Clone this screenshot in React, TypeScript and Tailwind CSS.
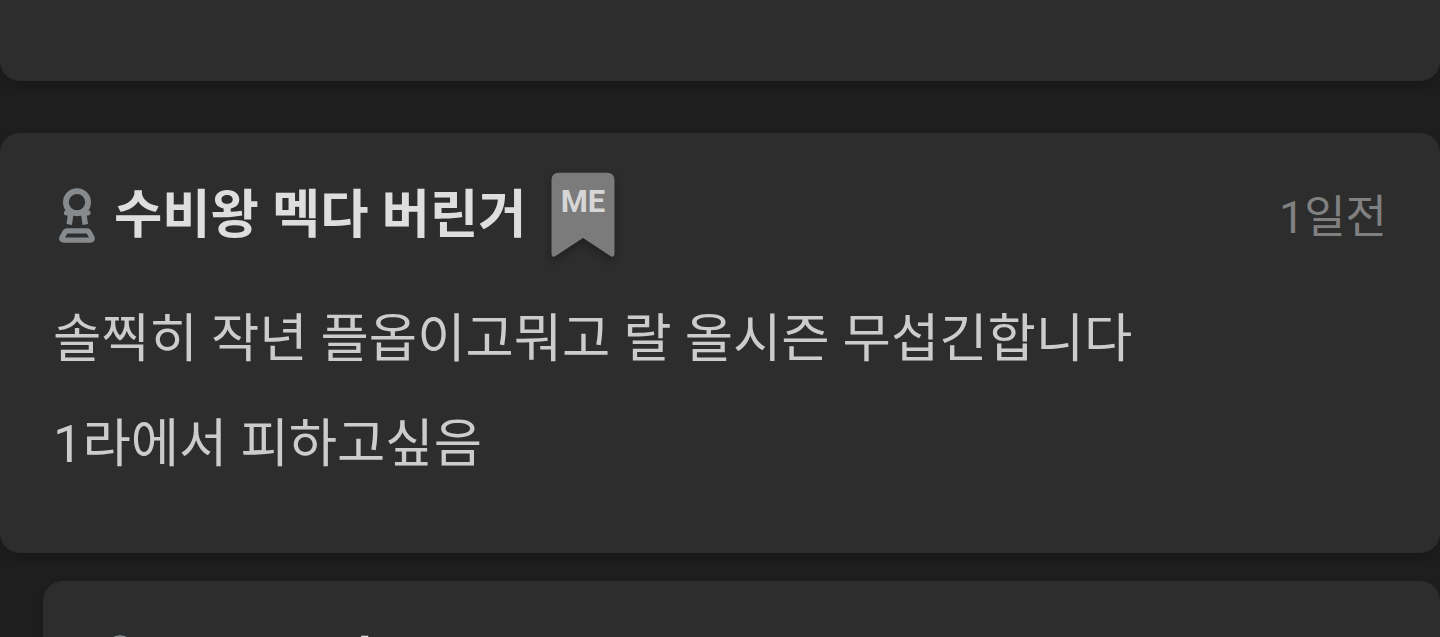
import type { ReactNode } from 'react'

const fontStack = "font-['Roboto','Noto_Sans_CJK_KR',sans-serif]"

function RankIcon() {
  return (
    <svg width="40" height="58" viewBox="0 0 40 58" fill="none" stroke="#868a8d" strokeLinejoin="round" strokeLinecap="round">
      <circle cx="20" cy="16.2" r="11.1" strokeWidth="5.8" />
      <path d="M9.500 26.800H31" strokeWidth="5.2" />
      <path d="M13.700 28L12.200 38.500M26.800 28L28.300 38.500" strokeWidth="5.500" strokeLinecap="butt" />
      <path d="M10 44.900H30Q31.500 44.900 32.500 47L35 51.500Q36 54.100 33 54.100H7Q4 54.100 5 51.500L7.500 47Q8.500 44.900 10 44.900Z" strokeWidth="5.400" />
    </svg>
  )
}

function MeBadge() {
  return (
    <div className="relative h-[85px] w-[64px] shrink-0">
      <svg width="64" height="85" viewBox="0 0 64 85" className="overflow-visible drop-shadow-[0_4px_4px_rgba(0,0,0,0.3)]">
        <path d="M8 0.800H56Q63.500 0.800 63.500 8.300V81Q63.500 86.500 59 83.800L32 66L5 83.800Q0.500 86.500 0.500 81V8.300Q0.500 0.800 8 0.800Z" fill="#7b7b7b" />
      </svg>
      <span className="absolute inset-x-0 top-[12px] pl-px text-center text-[31px] leading-[36px] font-bold text-[#d6d6d6]">ME</span>
    </div>
  )
}

function Nickname({ children }: { children: ReactNode }) {
  return (
    <div className="flex items-center">
      <RankIcon />
      <span className="ml-[17px] text-[52.5px] leading-[60px] font-bold whitespace-nowrap text-[#dedede]">{children}</span>
    </div>
  )
}

export default function App() {
  return (
    <div className={`flex h-[637px] w-full flex-col overflow-hidden bg-[#1e1e1e] ${fontStack}`}>
      <div className="h-[81px] shrink-0 rounded-b-[20px] bg-[#2d2d2d] shadow-[0_6px_12px_rgba(0,0,0,0.2)]" />

      <article className="mt-[52px] h-[420px] shrink-0 rounded-[20px] bg-[#2d2d2d] pt-[39px] pr-[53px] pl-[53px] shadow-[0_6px_12px_rgba(0,0,0,0.2)]">
        <header className="flex h-[85px] items-center">
          <div className="ml-[4px]">
            <Nickname>수비왕 멕다 버린거</Nickname>
          </div>
          <div className="ml-[24px]">
            <MeBadge />
          </div>
          <time className="ml-auto pt-[6px] text-[45px] leading-[60px] text-[#808080]">1일전</time>
        </header>
        <div className="mt-[30px] text-[52.5px] leading-[105px] whitespace-nowrap text-[#cccccc]">
          <p>솔찍히 작년 플옵이고뭐고 랄 올시즌 무섭긴합니다</p>
          <p>1라에서 피하고싶음</p>
        </div>
      </article>

      <article className="mt-[28px] ml-[43px] h-[200px] shrink-0 rounded-[20px] bg-[#2d2d2d] pt-[51px] pl-[57px] shadow-[0_6px_12px_rgba(0,0,0,0.2)]">
        <Nickname>그 그 그아</Nickname>
      </article>
    </div>
  )
}
